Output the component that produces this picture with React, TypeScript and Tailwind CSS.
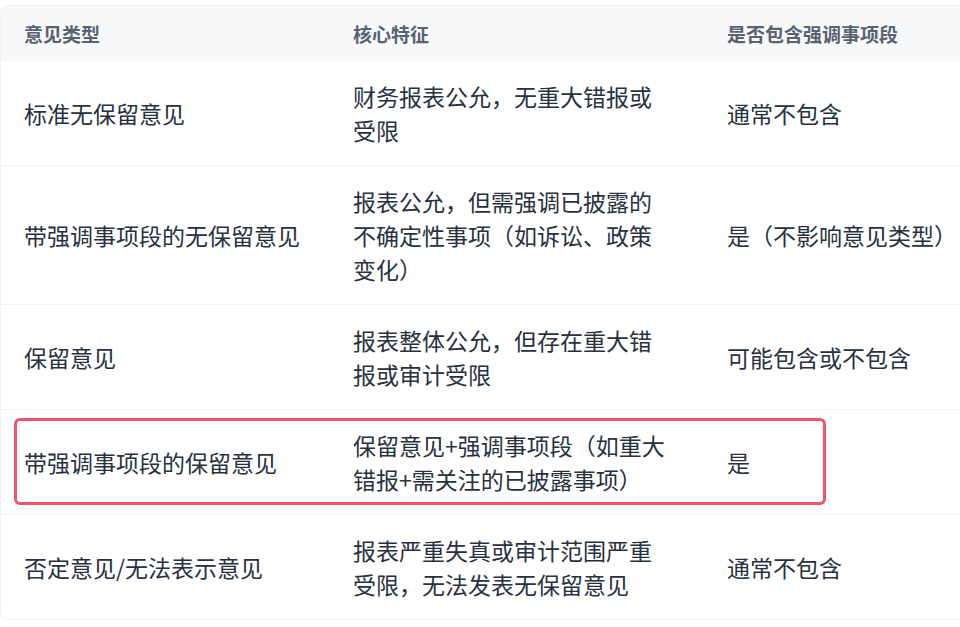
const rows = [
  {
    type: '标准无保留意见',
    feature: '财务报表公允，无重大错报或受限',
    emphasis: '通常不包含',
  },
  {
    type: '带强调事项段的无保留意见',
    feature: '报表公允，但需强调已披露的不确定性事项（如诉讼、政策变化）',
    emphasis: '是（不影响意见类型）',
  },
  {
    type: '保留意见',
    feature: '报表整体公允，但存在重大错报或审计受限',
    emphasis: '可能包含或不包含',
  },
  {
    type: '带强调事项段的保留意见',
    feature: '保留意见+强调事项段（如重大错报+需关注的已披露事项）',
    emphasis: '是',
    highlight: true,
  },
  {
    type: '否定意见/无法表示意见',
    feature: '报表严重失真或审计范围严重受限，无法发表无保留意见',
    emphasis: '通常不包含',
  },
];

export default function App() {
  return (
    <div
      className="h-[627px] w-[960px] overflow-hidden bg-white pt-[5px]"
      style={{ fontFamily: '"Noto Sans CJK SC", "Noto Sans", sans-serif' }}
    >
      <div className="w-[970px] overflow-hidden rounded-l-[8px] border border-r-0 border-[#f0f1f3]">
        {/* Header */}
        <div className="grid h-[55px] grid-cols-[328px_374px_1fr] items-center bg-[#f7f8fa] pt-[2px] text-[19px] font-semibold text-[#5a6170]">
          <div className="pl-[23px]">意见类型</div>
          <div className="pl-[24px]">核心特征</div>
          <div className="pl-[24px]">是否包含强调事项段</div>
        </div>

        {/* Body */}
        {rows.map((row, i) => (
          <div
            key={i}
            className={`relative grid grid-cols-[328px_374px_1fr] items-center text-[23px] leading-[34px] text-[#283140] ${
              i > 0 ? 'border-t border-[#f0f1f3]' : ''
            }`}
          >
            <div className="py-[18px] pl-[23px]">{row.type}</div>
            <div className="py-[18px] pl-[24px] pr-[30px]">{row.feature}</div>
            <div className="py-[18px] pl-[24px]">{row.emphasis}</div>
            {row.highlight && (
              <div className="pointer-events-none absolute left-[13px] top-[8px] bottom-[9px] w-[812px] rounded-[6px] border-[3px] border-[#f2526a]" />
            )}
          </div>
        ))}
      </div>
    </div>
  );
}
